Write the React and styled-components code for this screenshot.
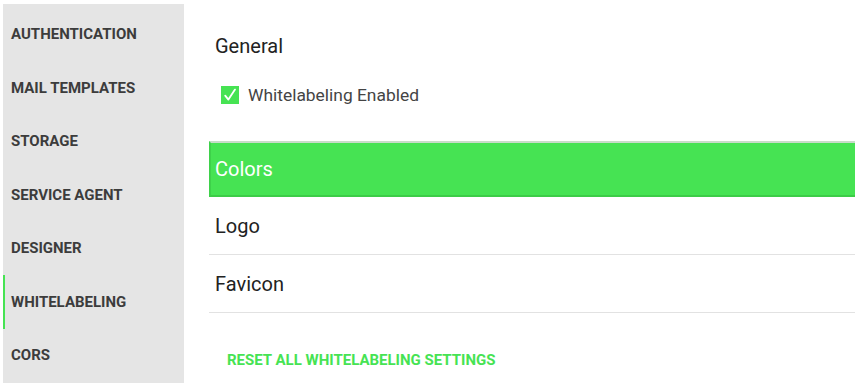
import React from "react";
import styled, { createGlobalStyle } from "styled-components";

const Global = createGlobalStyle`
  html, body { margin: 0; padding: 0; background: #fff; }
  body { font-family: Roboto, "Noto Sans", Arial, sans-serif; }
`;

const Page = styled.div`
  display: flex;
  padding: 4px 0 0 3px;
  height: 383px;
  box-sizing: border-box;
  overflow: hidden;
`;

const Sidebar = styled.nav`
  width: 181px;
  flex: none;
  background: #e5e5e5;
  padding-top: 3.5px;
  display: flex;
  flex-direction: column;
`;

const NavItem = styled.div`
  height: 53.5px;
  display: flex;
  align-items: center;
  padding-left: 6px;
  box-sizing: border-box;
  font-size: 15px;
  font-weight: 700;
  color: #3c3c3c;
  text-transform: uppercase;
  border-left: 2px solid ${(p) => (p.$active ? "#46e353" : "transparent")};
`;

const Main = styled.main`
  flex: 1;
  margin-left: 25px;
  display: flex;
  flex-direction: column;
  min-width: 0;
`;

const Title = styled.div`
  margin: 30px 0 0 6px;
  font-size: 20px;
  line-height: 24px;
  color: #222;
`;

const CheckRow = styled.label`
  margin: 28px 0 0 12px;
  display: flex;
  align-items: center;
  gap: 9px;
  height: 18px;
  font-size: 17.4px;
  color: #444;
`;

const Box = styled.span`
  width: 18px;
  height: 18px;
  background: #46e353;
  display: flex;
  align-items: center;
  justify-content: center;
`;

const Sections = styled.div`
  margin-top: 37px;
  display: flex;
  flex-direction: column;
`;

const Section = styled.div`
  height: ${(p) => (p.$active ? "56px" : "58px")};
  box-sizing: border-box;
  display: flex;
  align-items: center;
  padding-left: ${(p) => (p.$active ? "4px" : "6px")};
  font-size: 20px;
  color: ${(p) => (p.$active ? "#fff" : "#222")};
  background: ${(p) => (p.$active ? "#46e353" : "transparent")};
  border: ${(p) => (p.$active ? "2px solid #3ed14a" : "none")};
  border-top-color: ${(p) => (p.$active ? "#c8dcc9" : "transparent")};
  border-bottom: ${(p) => (p.$active ? "2px solid #3ccc47" : "1px solid #e2e2e2")};
  border-right: none;
`;

const ResetButton = styled.button`
  align-self: flex-start;
  margin: 39px 0 0 18px;
  padding: 0;
  border: none;
  background: none;
  font-family: inherit;
  font-size: 15px;
  font-weight: 700;
  line-height: 16px;
  color: #46e353;
  text-transform: uppercase;
  cursor: pointer;
`;

const navs = [
  "Authentication",
  "Mail Templates",
  "Storage",
  "Service Agent",
  "Designer",
  "Whitelabeling",
  "CORS",
];

export default function App() {
  return (
    <>
      <Global />
      <Page>
        <Sidebar>
          {navs.map((n) => (
            <NavItem key={n} $active={n === "Whitelabeling"}>
              {n}
            </NavItem>
          ))}
        </Sidebar>
        <Main>
          <Title>General</Title>
          <CheckRow>
            <Box>
              <svg width="14" height="14" viewBox="0 0 14 14">
                <path
                  d="M2.2 7.6 L5.4 11.6 L12 1.6"
                  fill="none"
                  stroke="#fff"
                  strokeWidth="1.8"
                  strokeLinecap="round"
                  strokeLinejoin="round"
                />
              </svg>
            </Box>
            Whitelabeling Enabled
          </CheckRow>
          <Sections>
            <Section $active>Colors</Section>
            <Section>Logo</Section>
            <Section>Favicon</Section>
          </Sections>
          <ResetButton>Reset all whitelabeling settings</ResetButton>
        </Main>
      </Page>
    </>
  );
}
